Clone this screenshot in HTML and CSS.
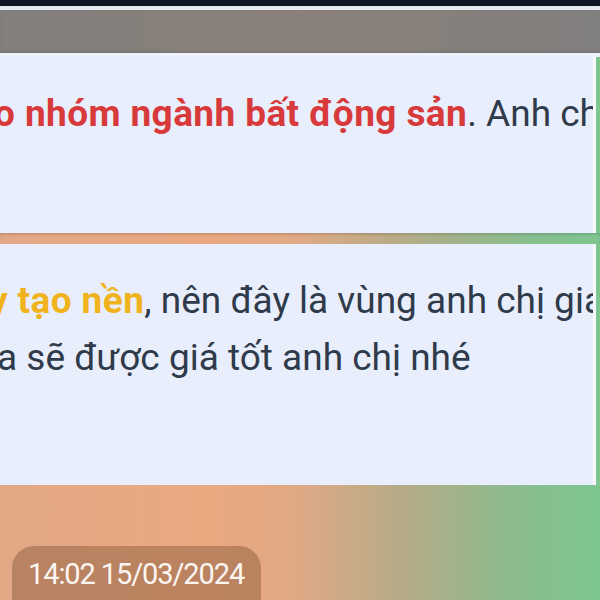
FILE: index.html
```html
<!DOCTYPE html>
<html lang="vi">
<head>
<meta charset="utf-8">
<link rel="stylesheet" href="styles.css">
</head>
<body>
<div class="screen">
  <div class="topbar"></div>
  <div class="topline"></div>
  <div class="band"></div>
  <div class="gap"></div>
  <div class="card card-one">
    <div class="line line-a"><span class="hl-red">o nhóm ngành bất động sản</span>. Anh chị</div>
  </div>
  <div class="sep"></div>
  <div class="card card-two">
    <div class="line line-b"><span class="hl-yellow">y tạo nền</span>, nên đây là vùng anh chị giao dịch</div>
    <div class="line line-c">a sẽ được giá tốt anh chị nhé</div>
  </div>
  <div class="footer">
    <div class="stamp">14:02 15/03/2024</div>
  </div>
</div>
</body>
</html>
```
FILE: styles.css
```css
html, body {
  margin: 0;
  padding: 0;
}
body {
  width: 600px;
  height: 600px;
  overflow: hidden;
  font-family: Roboto, "Noto Sans", sans-serif;
}
.screen {
  display: flex;
  flex-direction: column;
  width: 600px;
  height: 600px;
  background: linear-gradient(90deg, #e2a886 0%, #eaa880 35%, #dfa985 50%, #b8ab87 66%, #9db48b 78%, #88be8f 88%, #7ec690 100%);
}
.topbar {
  height: 6px;
  background: #0f1522;
  flex: none;
}
.topline {
  height: 4px;
  background: #e6e9f0;
  flex: none;
}
.band {
  height: 43px;
  flex: none;
  background: linear-gradient(90deg, #827f7d 0%, #87807b 30%, #8b817b 50%, #86807c 75%, #817f7f 100%);
  box-shadow: inset 0 -2px 2px rgba(0,0,0,0.08);
}
.gap {
  height: 4px;
  flex: none;
  background: #eef2fb;
}
.card {
  flex: none;
  background: #e8eefb;
  border-right: 3px solid #f7f9fe;
  margin-right: 4px;
  overflow: hidden;
  color: #2f3a4b;
  font-size: 37px;
  line-height: 57px;
  white-space: nowrap;
}
.card-one {
  height: 176px;
  padding-top: 84px;
  box-sizing: border-box;
}
.card-one .line { margin-top: -56px; }
.sep {
  height: 11px;
  flex: none;
  box-shadow: inset 0 2px 2px rgba(0,0,0,0.12);
}
.card-two {
  height: 241px;
  padding-top: 28px;
  box-sizing: border-box;
}
.line-a { margin-left: -6px; }
.line-b { margin-left: -11px; }
.line-c { margin-left: -3px; }
.hl-red {
  color: #d83a3b;
  font-weight: 700;
  letter-spacing: 0.4px;
}
.hl-yellow {
  color: #f1b31d;
  font-weight: 700;
  letter-spacing: 0.4px;
}
.footer {
  flex: 1;
  display: flex;
  align-items: flex-end;
  padding-left: 12px;
}
.stamp {
  background: rgba(150, 100, 70, 0.55);
  color: #fbf6f2;
  font-size: 29px;
  line-height: 52px;
  height: 52px;
  padding: 2px 17px 0 16px;
  border-radius: 22px 22px 0 0;
  letter-spacing: -1.1px;
}
```
